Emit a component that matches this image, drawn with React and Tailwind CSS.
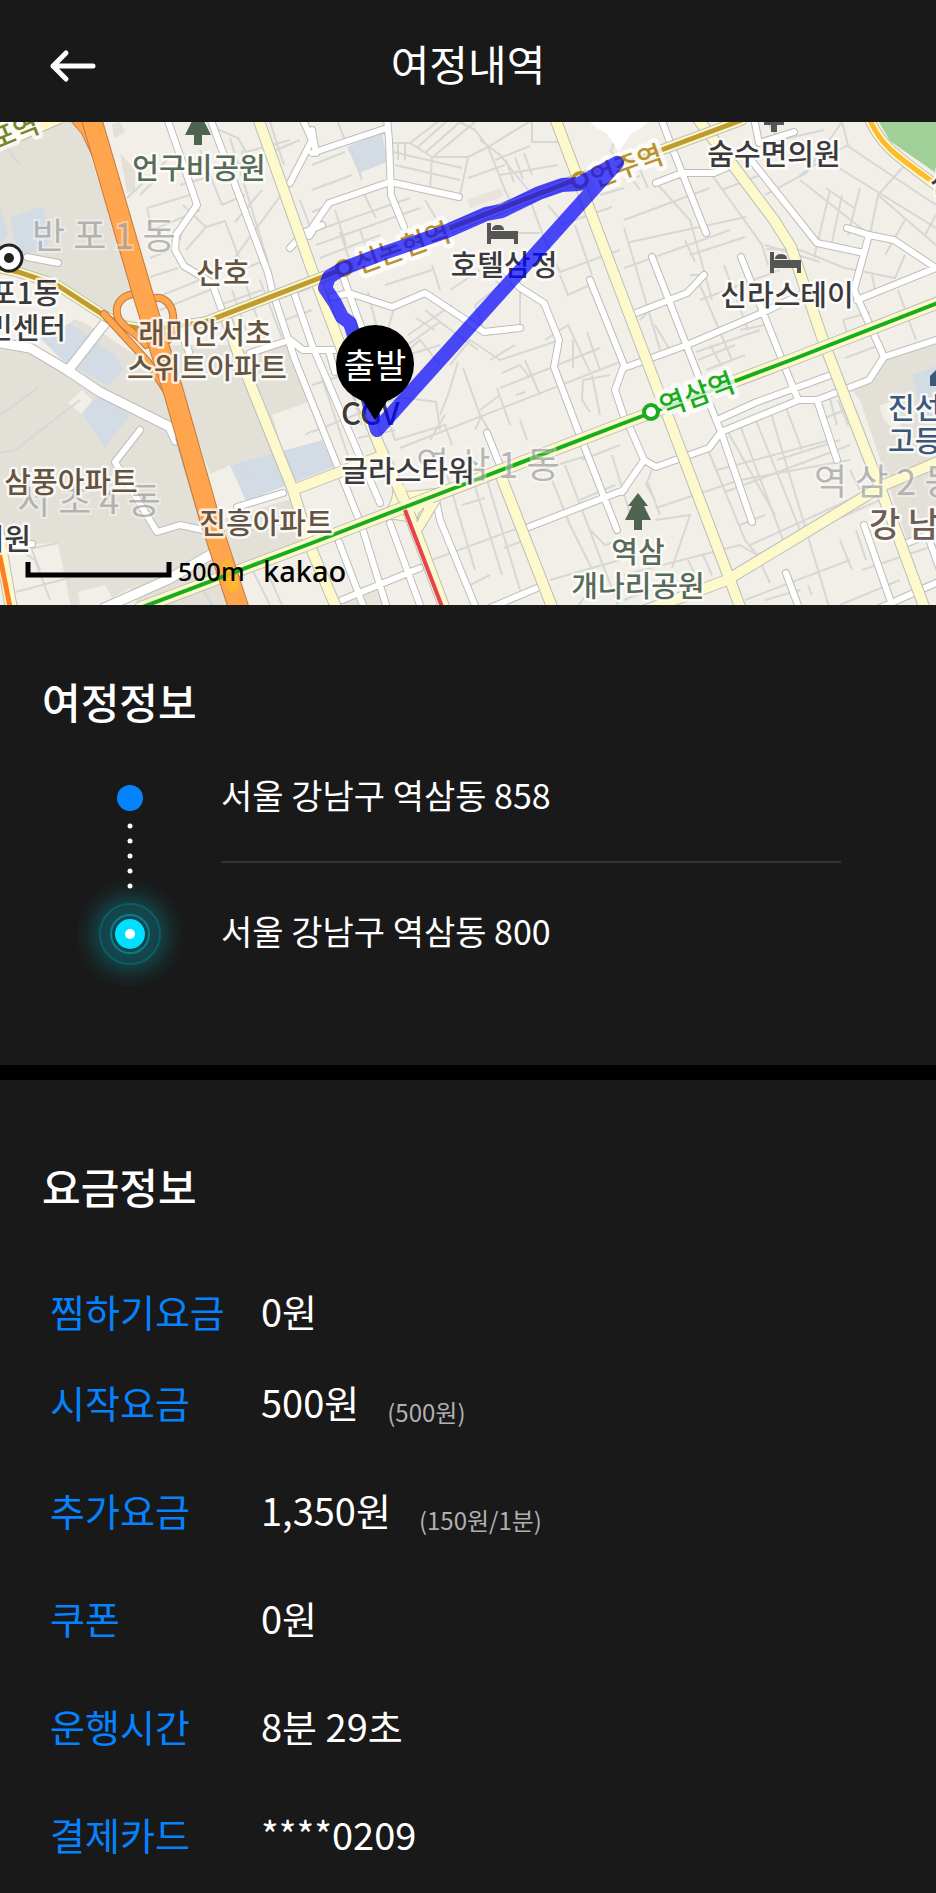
import React from 'react';

const lightLand = '#f2efe8';

const blocks = [
  { fill: '#e3e0d8', d: 'M0 122H72L82 130L134 293L105 316L57 285L0 268Z' },
  { fill: '#e3e0d8', d: 'M0 345L30 349L67 370L60 330L75 319L98 330L160 372L240 612H72L58 543L0 545Z' },
  { fill: '#e3e0d8', d: 'M160 345L232 345L250 353L290 340L314 400L272 415L284 455L231 465L210 474L178 385Z' },
  { fill: '#e3e0d8', d: 'M222 520L300 496L310 540L236 568Z' },
  { fill: '#e3e0d8', d: 'M885 358L936 344V520L907 540L860 400L850 388L870 380Z' },
  { fill: '#e3e0d8', d: 'M112 124L120 122L125 132L114 138ZM120 153L135 170V190L127 193Z' },
  { fill: '#e9e4db', d: 'M467 200L500 188L504 196L470 208Z' },
  { fill: '#e9e4db', d: 'M342 600L375 585L385 605H342Z' },
  { fill: '#f2efe8', d: 'M68 403L82 390L92 400L82 414ZM210 475L231 466L246 502L224 508Z' },
  { fill: '#f2efe8', d: 'M78 592L105 585L112 598L130 588L138 605H80Z' },
  { fill: '#f2efe8', d: 'M879 406L893 400L905 440L884 420Z' },
  { fill: '#d3dce4', d: 'M10 218L42 206L50 230L47 250L18 254ZM0 208L8 235L0 245Z' },
  { fill: '#d3dce4', d: 'M40 338L70 323L115 355L124 370L108 386L84 372L62 360Z' },
  { fill: '#d3dce4', d: 'M82 413L100 393L130 415L105 448Z' },
  { fill: '#d3dce4', d: 'M230 465L312 443L322 440L334 467L246 501Z' },
  { fill: '#d3dce4', d: 'M347 147L382 132L387 162L359 173Z' },
  { fill: '#d3dce4', d: 'M912 375L936 366V420L922 412Z' },
  { fill: '#a0cf98', d: 'M879 122H936V173L890 141Z' },
];

// Alleys, drawn as thin grey lines
const alleys = [
  // north west
  'M127 198L167 160M147 208L190 195M147 208L152 230L200 210M183 205L206 227L186 250M206 227L225 221L240 260M150 277L178 268M155 298L200 280',
  'M222 205L245 195M230 138L268 262M233 260L290 183M215 128L238 138L246 152L290 140M243 150L240 165L300 140M270 122L284 165',
  'M200 150L222 205M225 275L262 262M160 310L210 290M180 185L205 178M262 190L235 222M185 215L180 240',
  'M232 290L246 330M246 285L264 338M260 280L282 338M220 305L262 290M140 195L155 180M300 200L312 232M276 300L310 288M285 320L312 310M150 258L170 250',
  // centre north
  'M337 120L345 140M312 190L352 175M312 212L330 205M362 190L376 218M312 165L345 152M352 150L362 180',
  'M312 232L410 198M316 245L420 208M320 258L380 235M335 210L346 245M360 230L370 258M340 232L350 262M425 200L440 225M395 165L460 180M393 152L462 168',
  'M392 143L410 143L432 157L430 190M398 143V160M405 143V160M432 157H468L460 195M410 143L440 120M418 147L448 120M426 152L460 122M434 156L475 122M468 157L488 147L505 190',
  'M488 147L532 120M488 147L475 130L460 122M495 160L530 146M500 175L558 165M506 160L514 182M515 157L523 179M524 153L532 175M532 142V120M532 142H570M480 140L500 155L528 190M468 178L505 165',
  'M505 190L512 205M530 200L556 270M512 233H540M535 250L520 262L519 285M548 245L560 272L620 250M560 225L612 207M480 262L500 285L475 305L484 330M385 285L432 270M368 292L380 340M432 265L440 290M450 290L480 270',
  'M395 305L382 350M408 335L452 305M416 318L435 330M400 350L440 322L478 350M390 365L420 340L440 365M470 340L500 360L560 340M520 290V330M490 360L515 345M440 322L425 310M545 340L568 325L590 372M573 340V368M587 332L600 370M560 275L568 295L590 285',
  'M618 120L612 150M570 155L584 210M600 195L624 188M610 150L640 190M548 205L560 220M575 225L592 275M450 365L470 340M352 300L368 350',
  // north east
  'M624 220L710 188M630 242L746 217M624 268L730 230M690 255L745 237M640 320L660 300M700 300L780 270M690 275L705 275M656 183L690 220L712 300M624 228L636 268L660 350M685 240L695 262M712 175L762 245L768 265',
  'M700 285L732 360M724 265L748 330M765 245L820 262M765 195L806 173L842 122M722 190L760 175M800 180L866 232M830 190L814 258M842 195L832 242M860 188L848 235M826 188L854 208M834 165L936 228M846 145L936 205M878 195L936 245',
  'M905 165L878 195L870 235M842 122L848 145L830 155L800 175M905 220L885 255M936 215L925 235M766 249L800 250L845 268L895 278L905 255M872 275L876 295M898 290L916 340M843 320L870 312M843 320L850 342L866 332M845 358L880 345',
  'M696 352L760 330M710 345L725 372M706 370L745 355M698 360L735 345M655 325L670 350M740 330L765 325M640 170L648 188M624 180L640 176M765 120L780 140L824 130',
  // centre south
  'M312 432L400 397L436 402L440 430M380 395L395 440L445 425L452 445M458 362L448 395L440 415M322 378L352 468M345 372L362 425M312 385L440 345M463 368L480 415L490 432M400 448L625 360M358 438L395 430',
  'M500 388L600 348M497 388L510 425M502 373L520 365L530 378M480 410L500 395M520 420L527 440M516 395L525 392M525 360L540 395M583 380L610 375M583 380L582 400L590 412M592 375L600 415M482 415L475 430',
  'M447 475L475 570M470 470L502 575M487 480L520 590M462 505L485 498M432 560L620 490M504 548L530 538M470 585L490 575M540 470L590 455M552 480L570 525L600 585M565 465L620 610M580 500L615 485M590 530L605 545L620 540',
  'M582 460L620 445M612 455L632 520M550 580L620 560M430 440L445 415M575 610L590 590',
  // south east
  'M708 450L745 540L757 555M728 432L775 515M740 425L785 545M755 418L800 530M770 410L830 610M785 405L802 450M717 470L830 440M725 492L850 445M777 460L840 440M740 525L765 515M750 545L860 495M656 508L740 480L850 460M648 483L660 515M652 470L646 485L655 500',
  'M655 520L690 515L672 568M624 575L740 545L757 555L880 500M688 560L700 585M703 555L712 575M757 555L770 583M745 600L850 560M765 600L800 590M840 540L852 570M856 530L866 560M829 395L837 425M838 400L848 425M820 420L845 410M624 600L650 590M808 585L812 595',
  'M862 570L936 545M840 605L900 580M660 590L680 610M850 470L860 490',
  // south west
  'M0 453L15 450L80 400M0 415L38 388M12 545L35 560L50 600M15 552L58 543M16 592L80 575M30 545L40 570M200 585L212 605M250 565L270 605M262 560L282 605M246 470L250 478M305 435L312 431M0 140L20 165',
];

const streets = [
  'M167 118L192 190L197 205L176 235L175 250L184 266L212 283L226 322',
  'M210 118L268 273L272 290L295 360L335 460L362 527L387 608',
  'M302 118L312 140L290 183M322 225L305 232L290 248M312 232L309 236',
  'M293 290L312 345L360 457L380 503',
  'M250 353L290 340L303 350H337M329 352L335 372',
  'M27 257L58 263M180 330L189 352',
  'M312 153L387 128M387 118L389 140L391 195L404 227M312 130L316 153',
  'M312 228L329 203L390 182L459 197',
  'M340 268L364 335M332 297L349 293L392 307L425 293L484 332L520 328',
  'M505 270L519 287L544 303L559 340L554 367L579 433L604 497L617 530',
  'M590 280L624 365L615 390L624 417L631 430L644 460',
  'M661 118L671 145L706 233M656 183L682 173H714L735 164',
  'M754 118L759 143L794 132M751 160L817 243L864 253',
  'M847 228L869 235L894 240L936 268M869 235L854 290L884 357L936 340M857 300L936 268',
  'M884 357L869 380L817 400H799L721 432L709 448L656 467L644 460L622 492',
  'M652 257L696 370L721 432L752 522M636 313L687 293L704 275',
  'M624 368L687 345L762 313L800 295M741 257L786 370L797 397',
  'M717 420L757 402L831 375M817 400L837 460',
  'M864 525L893 608M880 608L936 583M907 543L936 532M930 542L940 570M786 573L799 608',
  'M487 433L499 463M437 505L440 520L476 608M529 527L624 490M490 608L537 588',
  'M339 542L364 608M390 523L421 608M342 600L420 568',
  'M140 430L115 462L157 532L180 525L203 530M237 507L283 493M0 546L32 544',
];

const wideStreets = [
  'M0 343L30 348L67 370L100 392L170 427L176 440',
  'M106 322L70 368M104 608L167 580L210 555',
];

const avenues = [
  'M258 118L312 270L342 350L379 445L404 500',
  'M555 118L620 290L731 583L742 612',
  'M697 118L714 140L774 220L791 247L824 343L881 490L926 612',
  'M226 318L238 353L293 490L310 546L338 612',
  'M293 490L379 457',
  'M497 466L554 612',
  'M940 461L884 485L727 580L674 600L640 612',
  'M404 500L446 612M436 498L415 532',
  'M0 144L60 118',
];

const mainRoad = 'M0 268L18 272L57 285L105 316L125 326L150 330L205 322L312 281L580 178L664 149L742 120';
const greenLine = 'M140 608L312 543L405 507L624 423L791 360L940 302';
const highway = 'M86 100L143 295L157 340L166 368L173 390L210 520L240 612';
const ramps = 'M136 294C124 294 115 303 117 314C119 326 134 330 146 345M150 300C162 293 172 304 173 315C174 326 174 332 168 340M104 314L148 362L166 390';
const route =
  'M377 430L617 163L579 184L562 185L539 193L502 211L486 214L445 232L384 253L342 269L329 277L325 288L335 303L342 317L350 323L356 342L368 400L377 430';

function Road({ d, width, color, edge = '#bdbdb9', cap = 'round' }) {
  return (
    <g fill="none" strokeLinecap={cap} strokeLinejoin="round">
      <path d={d} stroke={edge} strokeWidth={width + 2} />
      <path d={d} stroke={color} strokeWidth={width} />
    </g>
  );
}

function Place({ x, y, color = '#3a3a3c', size = 29, anchor = 'middle', angle = 0, halo = 5, children }) {
  return (
    <text
      x={x}
      y={y}
      fill={color}
      fontSize={size}
      fontWeight="500"
      textAnchor={anchor}
      stroke="#ffffff"
      strokeOpacity="0.8"
      strokeWidth={halo}
      strokeLinejoin="round"
      paintOrder="stroke"
      transform={angle ? `rotate(${angle} ${x} ${y})` : undefined}
    >
      {children}
    </text>
  );
}

function District({ x, y, children }) {
  return (
    <text
      x={x}
      y={y}
      fill="#8c8c8c"
      fillOpacity="0.6"
      fontSize="36"
      stroke="#ffffff"
      strokeOpacity="0.4"
      strokeWidth="4"
      paintOrder="stroke"
    >
      {children}
    </text>
  );
}

function Tree({ x, y }) {
  return (
    <path
      transform={`translate(${x} ${y})`}
      fill="#4f6450"
      d="M0 0L10 13H6L13 27H4V37H-4V27H-13L-6 13H-10Z"
    />
  );
}

function Bed({ x, y }) {
  return (
    <path
      transform={`translate(${x} ${y})`}
      fill="#555555"
      d="M0 0H4V8H31V21H27V16H4V21H0ZM5 7C5 4 7 2 11 2C15 2 17 4 17 7Z"
    />
  );
}

function RouteMap() {
  return (
    <svg
      className="block h-[483px] w-full"
      viewBox="0 122 936 483"
      preserveAspectRatio="xMidYMid slice"
      role="img"
      aria-label="이동 경로 지도"
    >
      <rect x="0" y="122" width="936" height="483" fill={lightLand} />
      {blocks.map((block) => (
        <path key={block.d} d={block.d} fill={block.fill} />
      ))}
      <g fill="none" stroke="#d7d7d5" strokeWidth="2">
        {alleys.map((d) => (
          <path key={d} d={d} />
        ))}
      </g>

      <Road d={streets.join('')} width={6} color="#ffffff" />
      <Road d={wideStreets.join('')} width={9} color="#ffffff" />
      <path d="M176 438L203 530" fill="none" stroke="#b5b5b0" strokeWidth="2" />
      <path
        d="M393 485L400 490C405 493 420 490 440 488L445 494C430 503 432 505 425 520L418 530L408 522C400 520 390 518 372 520C390 510 393 500 393 485Z"
        fill="#fdf9cb"
        stroke="#bdbdb9"
      />
      <Road d={avenues.join('')} width={10} color="#fdf9cb" cap="butt" />
      <Road d={mainRoad} width={9} color="#fdf9cb" />
      <Road d={greenLine} width={11} color="#fdf9cb" />
      <path d="M400 486L408 510L432 500" fill="none" stroke="#fdf9cb" strokeWidth="8" />
      <path d="M418 514L424 508L417 522Z" fill="#e3e0d8" stroke="#bdbdb9" />
      <path d={mainRoad} fill="none" stroke="#bf9b30" strokeWidth="5" />
      <path d="M405 510L444 612" fill="none" stroke="#e4434f" strokeWidth="4" />
      <Road d="M-2 532L12 612" width={11} color="#fdf9cb" />
      <path d="M-1 552L11 612" fill="none" stroke="#ff7e1f" strokeWidth="5" />
      <Road d="M868 116C880 145 895 155 940 188" width={9} color="#fdf9cb" />
      <path d="M868 116C880 145 895 155 933 182" fill="none" stroke="#ffbb2a" strokeWidth="5" />

      <Road d={ramps} width={6} color="#ffa54e" edge="#c27a3d" />
      <path d="M70 120H98L94 160L82 134Z" fill="#ffa54e" stroke="#c27a3d" />
      <Road d={highway} width={19} color="#ffa54e" edge="#c27a3d" />
      <path d={greenLine} fill="none" stroke="#17ad1c" strokeWidth="4" />
      <path d="M222 563C228 556 234 562 232 572C242 580 240 592 233 593C226 592 227 584 226 578C221 574 220 568 222 563Z" fill="#ffb92e" fillOpacity="0.85" />

      <g fontFamily="'Noto Sans CJK KR', sans-serif">
        <District x="32" y="249">반 포 1 동</District>
        <District x="17" y="514">서 초 4 동</District>
        <District x="416" y="478">역 삼 1 동</District>
        <District x="814" y="495">역 삼 2 동</District>

        <Tree x={198} y={108} />
        <Place x={199} y={179} color="#566b58">언구비공원</Place>
        <Place x={-5} y={150} color="#74862a" anchor="start" angle={-22} size={27} halo={8}>포역</Place>
        <Place x={223} y={284} color="#64543f">산호</Place>
        <Place x={205} y={344} color="#64543f">래미안서초</Place>
        <Place x={207} y={379} color="#64543f">스위트아파트</Place>
        <Place x={60} y={304} anchor="end">포1동</Place>
        <Place x={66} y={339} anchor="end">민센터</Place>
        <Place x={71} y={493} color="#64543f">삼풍아파트</Place>
        <Place x={31} y={550} anchor="end">의원</Place>
        <Place x={266} y={534} color="#64543f">진흥아파트</Place>

        <Bed x={487} y={223} />
        <Place x={504} y={276}>호텔삼정</Place>
        <Place x={341} y={425} anchor="start" size={31} halo={2}>CGV</Place>
        <Place x={408} y={482}>글라스타워</Place>

        <path d="M764 122H784V125H777V132H771V125H764Z" fill="#555555" />
        <Place x={774} y={165}>숨수면의원</Place>
        <Bed x={770} y={252} />
        <Place x={787} y={306}>신라스테이</Place>
        <Place x={930} y={193} anchor="start">선</Place>

        <Tree x={638} y={493} />
        <Place x={638} y={563} color="#566b58">역삼</Place>
        <Place x={638} y={597} color="#566b58">개나리공원</Place>
        <path d="M930 386V376L936 370V386Z" fill="#3c5878" />
        <Place x={888} y={419} color="#3c5878" anchor="start">진선</Place>
        <Place x={888} y={452} color="#3c5878" anchor="start">고등</Place>
        <Place x={869} y={537} color="#6e5d54" anchor="start" size={34}>강 남</Place>

        <circle cx="344" cy="268" r="7" fill="#ffffff" stroke="#b8922c" strokeWidth="4" />
        <Place x={359} y={274} color="#b8922c" anchor="start" angle={-20} size={27} halo={9}>신논현역</Place>
        <circle cx="580" cy="180" r="7" fill="#ffffff" stroke="#b8922c" strokeWidth="4" />
        <Place x={595} y={188} color="#b8922c" anchor="start" angle={-20} size={27} halo={9}>언주역</Place>
        <Place x={664} y={417} color="#17ad1c" anchor="start" angle={-20} size={28} halo={9}>역삼역</Place>
        <circle cx="651" cy="412" r="7" fill="#ffffff" stroke="#17ad1c" strokeWidth="4" />
        <circle cx="9" cy="258" r="13" fill="#ffffff" stroke="#222222" strokeWidth="3" />
        <circle cx="9" cy="258" r="5" fill="#222222" />

        <circle cx="619" cy="96" r="39" fill="#ffffff" />
        <path d="M606 132L619 152L632 132Z" fill="#ffffff" />
        <path d={route} fill="none" stroke="#0000ff" strokeOpacity="0.7" strokeWidth="14" strokeLinecap="round" strokeLinejoin="round" />

        <path d="M361 398L375 420L389 398Z" fill="#000000" />
        <circle cx="375" cy="364" r="39" fill="#000000" />
        <text x="375" y="378" fill="#ffffff" fontSize="34" textAnchor="middle">출발</text>

        <path d="M28 562V575H169V562" fill="none" stroke="#000000" strokeWidth="5" />
      </g>
      <g fontFamily="'Noto Sans', sans-serif" fontWeight="500" fill="#000000">
        <text x="178" y="581" fontSize="25">500m</text>
        <text x="263" y="582" fontSize="29">kakao</text>
      </g>
    </svg>
  );
}

function TripMarkers() {
  return (
    <svg className="h-[204px] w-[104px]" viewBox="0 0 104 204" aria-hidden="true">
      <defs>
        <radialGradient id="glow">
          <stop offset="0" stopColor="#00c8dc" stopOpacity="0.34" />
          <stop offset="0.5" stopColor="#00c8dc" stopOpacity="0.24" />
          <stop offset="0.8" stopColor="#00c8dc" stopOpacity="0.06" />
          <stop offset="1" stopColor="#00c8dc" stopOpacity="0" />
        </radialGradient>
      </defs>
      <circle cx="52" cy="16" r="13" fill="#0583ff" />
      <circle cx="52" cy="152" r="56" fill="url(#glow)" />
      {[44, 59, 74, 89, 104].map((y) => (
        <circle key={y} cx="52" cy={y} r="2.5" fill="#ffffff" />
      ))}
      <circle cx="52" cy="152" r="30" fill="none" stroke="#0b6a74" strokeOpacity="0.7" strokeWidth="2" />
      <circle cx="52" cy="152" r="19" fill="#10454b" stroke="#0a7f8b" strokeWidth="2" />
      <circle cx="52" cy="152" r="15" fill="#00dfff" />
      <circle cx="52" cy="152" r="5" fill="#ffffff" />
    </svg>
  );
}

const fares = [
  { label: '시작요금', value: '500원', note: '(500원)' },
  { label: '추가요금', value: '1,350원', note: '(150원/1분)' },
  { label: '쿠폰', value: '0원' },
  { label: '운행시간', value: '8분 29초' },
  { label: '결제카드', value: '****0209' },
];

function App() {
  return (
    <div className="min-h-screen bg-[#191919] font-['Noto_Sans_CJK_KR',sans-serif] text-white">
      <header className="grid h-[122px] grid-cols-[1fr_auto_1fr] items-center px-12 pt-2">
        <button type="button" aria-label="뒤로" className="justify-self-start">
          <svg className="block h-9 w-[50px]" viewBox="0 0 50 36" fill="none" stroke="#ffffff" strokeWidth="5" strokeLinecap="round" strokeLinejoin="round">
            <path d="M5 19H45M18 6L5 19L18 32" />
          </svg>
        </button>
        <h1 className="pb-1 text-[42px] leading-[56px]">여정내역</h1>
      </header>

      <RouteMap />

      <section className="pt-[68px] pb-16">
        <h2 className="px-[42px] text-[42px] leading-[56px] font-medium">여정정보</h2>
        <div className="mt-0.5 flex pr-[95px]">
          <div className="flex w-[221px] shrink-0 pt-[51px] pl-[78px]">
            <TripMarkers />
          </div>
          <ul className="flex-1 text-[34px]">
            <li className="flex h-[132px] items-center border-b-2 border-[#333333] pb-1">서울 강남구 역삼동 858</li>
            <li className="flex h-[138px] items-center pb-1">서울 강남구 역삼동 800</li>
          </ul>
        </div>
      </section>

      <div className="h-[15px] bg-black" />

      <section className="pt-[78px]">
        <h2 className="px-[42px] text-[42px] leading-[56px] font-medium">요금정보</h2>
        <dl className="mt-[60px] pl-[50px] text-[38px] leading-[56px]">
          <div className="flex h-[74px] items-center">
            <dt className="w-[211px] text-[#0583ff]">찜하기요금</dt>
            <dd>0원</dd>
          </div>
          {fares.map((fare) => (
            <div key={fare.label} className="flex h-[108px] items-center">
              <dt className="w-[211px] text-[#0583ff]">{fare.label}</dt>
              <dd className="flex items-end gap-7">
                {fare.value}
                {fare.note && <span className="text-[24px] leading-9 text-[#b0b0b0]">{fare.note}</span>}
              </dd>
            </div>
          ))}
        </dl>
      </section>
    </div>
  );
}

export default App;
